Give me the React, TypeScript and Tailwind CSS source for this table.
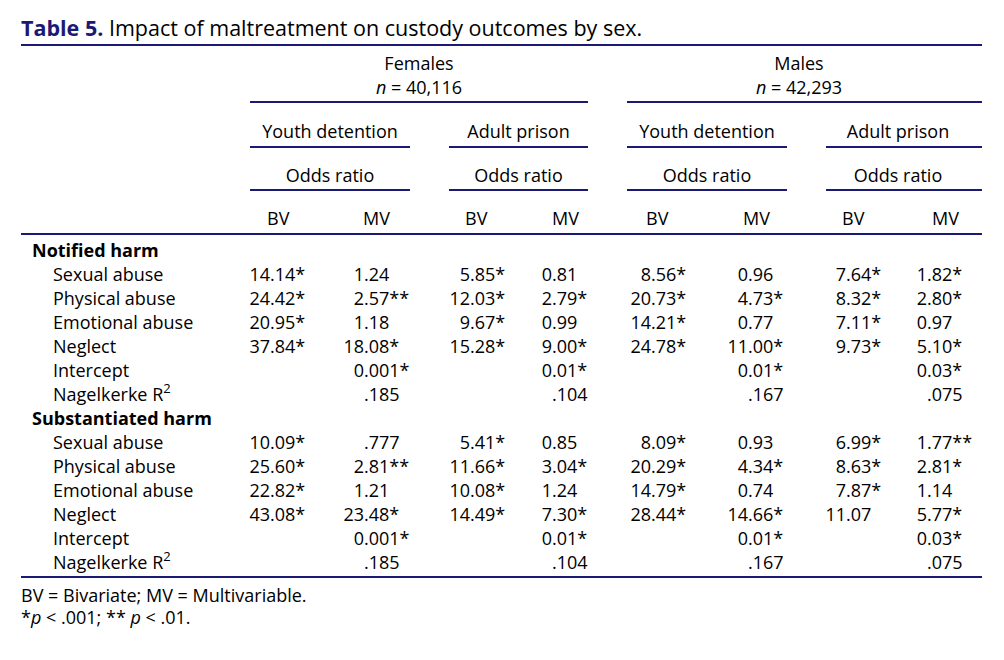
const navy = "border-[#1a1a75]";

const cols = [
  { w: "w-[94px]", pl: "pl-[27px]", h: "BV" },
  { w: "w-[106px]", pl: "pl-[29px]", h: "MV" },
  { w: "w-[82px]", pl: "pl-[25px]", h: "BV" },
  { w: "w-[99px]", pl: "pl-[30px]", h: "MV" },
  { w: "w-[97px]", pl: "pl-[25px]", h: "BV" },
  { w: "w-[98px]", pl: "pl-[25px]", h: "MV" },
  { w: "w-[81px]", pl: "pl-[26px]", h: "BV" },
  { w: "w-[85px]", pl: "pl-[35px]", h: "MV" },
];

const fit = ["", "0.001*", "", "0.01*", "", "0.01*", "", "0.03*"];
const r2 = ["", ".185", "", ".104", "", ".167", "", ".075"];

const sections = [
  {
    title: "Notified harm",
    rows: [
      ["Sexual abuse", "14.14*", "1.24", "5.85*", "0.81", "8.56*", "0.96", "7.64*", "1.82*"],
      ["Physical abuse", "24.42*", "2.57**", "12.03*", "2.79*", "20.73*", "4.73*", "8.32*", "2.80*"],
      ["Emotional abuse", "20.95*", "1.18", "9.67*", "0.99", "14.21*", "0.77", "7.11*", "0.97"],
      ["Neglect", "37.84*", "18.08*", "15.28*", "9.00*", "24.78*", "11.00*", "9.73*", "5.10*"],
      ["Intercept", ...fit],
      ["R2", ...r2],
    ],
  },
  {
    title: "Substantiated harm",
    rows: [
      ["Sexual abuse", "10.09*", ".777", "5.41*", "0.85", "8.09*", "0.93", "6.99*", "1.77**"],
      ["Physical abuse", "25.60*", "2.81**", "11.66*", "3.04*", "20.29*", "4.34*", "8.63*", "2.81*"],
      ["Emotional abuse", "22.82*", "1.21", "10.08*", "1.24", "14.79*", "0.74", "7.87*", "1.14"],
      ["Neglect", "43.08*", "23.48*", "14.49*", "7.30*", "28.44*", "14.66*", "11.07", "5.77*"],
      ["Intercept", ...fit],
      ["R2", ...r2],
    ],
  },
];

// integer part right-aligned, rest hangs after the decimal point
const Num = ({ value }: { value: string }) => {
  const dot = value.indexOf(".");
  const head = dot === -1 ? value : value.slice(0, dot);
  const tail = dot === -1 ? "" : value.slice(dot);
  return (
    <>
      <span className="w-[30px] text-right inline-block">{head}</span>
      <span className="whitespace-nowrap">{tail}</span>
    </>
  );
};

const Label = ({ text }: { text: string }) =>
  text === "R2" ? (
    <span>
      Nagelkerke R<sup className="text-[13px] -top-[0.6em]">2</sup>
    </span>
  ) : (
    <span>{text}</span>
  );

export default function App() {
  return (
    <div
      className="w-[1004px] h-[660px] bg-white text-black text-[18px] leading-[24px]"
      style={{ fontFamily: '"Open Sans", "Noto Sans", sans-serif' }}
    >
      <div className="ml-[21px] w-[961px]">
        <div className={`pt-[14px] pb-[2px] border-b-2 ${navy} text-[21.5px] leading-[28px]`}>
          <span className="font-bold text-[#1a1a75]">Table 5.</span> Impact of
          maltreatment on custody outcomes by sex.
        </div>

        {/* sex groups */}
        <div className="flex pt-[5px]">
          <div className="w-[229px]" />
          <div className={`w-[338px] pb-[2px] border-b-2 ${navy} text-center`}>
            <div>Females</div>
            <div>
              <i>n</i> = 40,116
            </div>
          </div>
          <div className="w-[39px]" />
          <div className={`w-[355px] pb-[2px] pr-[11px] border-b-2 ${navy} text-center`}>
            <div>Males</div>
            <div>
              <i>n</i> = 42,293
            </div>
          </div>
        </div>

        {/* outcome */}
        <div className="flex pt-[16px]">
          <div className="w-[229px]" />
          <div className={`w-[160px] pb-[3px] border-b-2 ${navy} text-center`}>Youth detention</div>
          <div className="w-[39px]" />
          <div className={`w-[139px] pb-[3px] border-b-2 ${navy} text-center`}>Adult prison</div>
          <div className="w-[39px]" />
          <div className={`w-[160px] pb-[3px] border-b-2 ${navy} text-center`}>Youth detention</div>
          <div className="w-[39px]" />
          <div className={`w-[156px] pb-[3px] pr-[12px] border-b-2 ${navy} text-center`}>Adult prison</div>
        </div>

        <div className="flex pt-[15px]">
          <div className="w-[229px]" />
          <div className={`w-[160px] pb-[2px] border-b-2 ${navy} text-center`}>Odds ratio</div>
          <div className="w-[39px]" />
          <div className={`w-[139px] pb-[2px] border-b-2 ${navy} text-center`}>Odds ratio</div>
          <div className="w-[39px]" />
          <div className={`w-[160px] pb-[2px] border-b-2 ${navy} text-center`}>Odds ratio</div>
          <div className="w-[39px]" />
          <div className={`w-[156px] pb-[2px] pr-[12px] border-b-2 ${navy} text-center`}>Odds ratio</div>
        </div>

        <div className={`flex pt-[15px] pb-[3px] border-b-2 ${navy}`}>
          <div className="w-[219px]" />
          {cols.map((c, i) => (
            <div key={i} className={`${c.w} ${c.pl}`}>
              {c.h}
            </div>
          ))}
        </div>

        {/* body */}
        <div className={`pt-[3px] pb-[2px] border-b-2 ${navy}`}>
          {sections.map((s) => (
            <div key={s.title}>
              <div className="pl-[11px] font-bold">{s.title}</div>
              {s.rows.map((row, ri) => (
                <div key={ri} className="flex">
                  <div className="w-[219px] pl-[32px]">
                    <Label text={row[0]} />
                  </div>
                  {row.slice(1).map((v, ci) => (
                    <div key={ci} className={`${cols[ci].w} flex`}>
                      {v && <Num value={v} />}
                    </div>
                  ))}
                </div>
              ))}
            </div>
          ))}
        </div>

        <div className="pt-[6px] leading-[22px]">
          <div>BV = Bivariate; MV = Multivariable.</div>
          <div>
            *<i>p</i> &lt; .001; ** <i>p</i> &lt; .01.
          </div>
        </div>
      </div>
    </div>
  );
}
